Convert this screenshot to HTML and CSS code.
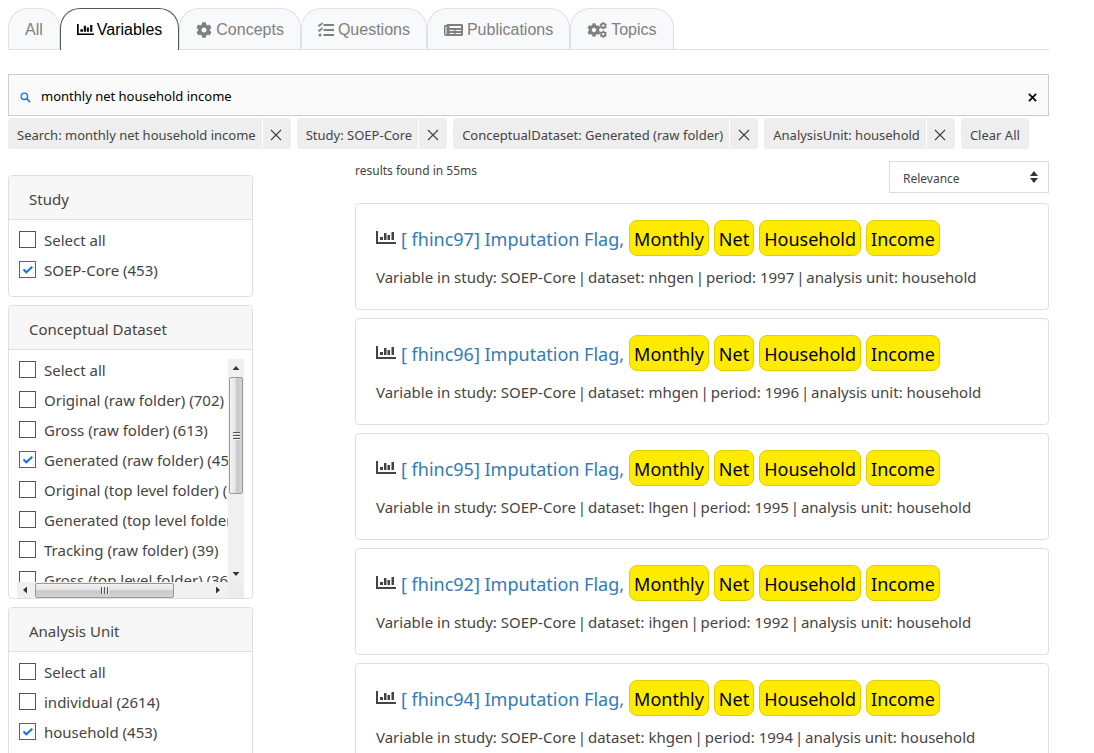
FILE: index.html
```html
<!DOCTYPE html>
<html lang="en">
<head>
<meta charset="utf-8">
<meta name="viewport" content="width=device-width, initial-scale=1">
<title>Variables search</title>
<link rel="stylesheet" href="styles.css">
</head>
<body>
<svg class="symbols" aria-hidden="true">
  <symbol id="i-chart" viewBox="0 0 20 14"><path fill="currentColor" d="M0 0h2v11h18v2H0zM4 6h3v3H4zM8 2h2.500v7H8zM11.500 4h2.500v5h-2.500zM15.500 1H18v8h-2.500z"/></symbol>
  <symbol id="i-cog" viewBox="0 0 512 512"><path fill="currentColor" d="M487.4 315.7l-42.600-24.600c4.300-23.200 4.300-47 0-70.200l42.600-24.600c4.900-2.800 7.100-8.600 5.500-14-11.100-35.600-30-67.800-54.700-94.600-3.800-4.100-10-5.100-14.800-2.300L380.800 110c-17.900-15.400-38.500-27.300-60.800-35.100V25.800c0-5.600-3.900-10.500-9.400-11.700-36.700-8.200-74.300-7.800-109.200 0-5.500 1.200-9.400 6.100-9.400 11.700V75c-22.200 7.900-42.800 19.800-60.800 35.100L88.700 85.500c-4.900-2.800-11-1.900-14.800 2.300-24.700 26.700-43.600 58.900-54.700 94.600-1.700 5.400.6 11.200 5.500 14L67.300 221c-4.300 23.200-4.300 47 0 70.200l-42.600 24.600c-4.900 2.800-7.100 8.600-5.500 14 11.100 35.600 30 67.800 54.700 94.600 3.800 4.100 10 5.100 14.800 2.300l42.600-24.600c17.900 15.400 38.500 27.300 60.800 35.100v49.200c0 5.600 3.900 10.500 9.400 11.700 36.700 8.200 74.300 7.800 109.200 0 5.500-1.200 9.400-6.100 9.400-11.700v-49.200c22.200-7.900 42.800-19.800 60.800-35.100l42.600 24.600c4.900 2.800 11 1.900 14.800-2.300 24.700-26.700 43.600-58.900 54.700-94.600 1.500-5.500-.7-11.300-5.600-14.100zM256 336c-44.100 0-80-35.900-80-80s35.900-80 80-80 80 35.900 80 80-35.900 80-80 80z"/></symbol>
  <symbol id="i-tasks" viewBox="0 0 16 16"><path d="M5.500 3H16M5.500 8H16M5.500 13H16" fill="none" stroke="currentColor" stroke-width="2"/><path d="M.3 2.700l1.200 1.200L4.500.9M.3 7.700l1.200 1.200 3-3" fill="none" stroke="currentColor" stroke-width="1.500"/><circle cx="2" cy="13" r="1.500" fill="currentColor"/></symbol>
  <symbol id="i-news" viewBox="0 0 19 14"><path fill="currentColor" fill-rule="evenodd" d="M3 1h15l1 1v10l-1 1H2a2 2 0 0 1-2-2V3a1 1 0 0 1 1-1h1.500zM1.500 3.500V11a.5.500 0 0 0 1 0V3.500zM5.500 3v2H17V3zm0 4v1H10V7zm6 0v1H17V7zm-6 3v1H10v-1zm6 0v1H17v-1z"/></symbol>
  <symbol id="i-cogs" viewBox="0 0 20 16"><use href="#i-cog" x="0" y="1" width="14" height="14"/><use href="#i-cog" x="12.500" y="0" width="7.500" height="7.500"/><use href="#i-cog" x="12.500" y="8.500" width="7.500" height="7.500"/></symbol>
  <symbol id="i-search" viewBox="0 0 12 12"><circle cx="4.700" cy="4.700" r="3.500" fill="none" stroke="currentColor" stroke-width="1.500"/><path d="M7.300 7.300L11 11" stroke="currentColor" stroke-width="1.800"/></symbol>
  <symbol id="i-close" viewBox="0 0 12 12"><path d="M1 1l10 10M11 1L1 11" stroke="currentColor" stroke-width="1.200"/></symbol>
  <symbol id="i-clear" viewBox="0 0 10 10"><path d="M1 1l8 8M9 1L1 9" stroke="currentColor" stroke-width="1.800"/></symbol>
</svg>

<div class="page">
  <nav class="tabs">
    <a class="tab" href="#all">All</a>
    <a class="tab active" href="#variables" aria-current="page"><svg class="icon chart"><use href="#i-chart"/></svg>Variables</a>
    <a class="tab" href="#concepts"><svg class="icon"><use href="#i-cog"/></svg>Concepts</a>
    <a class="tab" href="#questions"><svg class="icon"><use href="#i-tasks"/></svg>Questions</a>
    <a class="tab" href="#publications"><svg class="icon wide"><use href="#i-news"/></svg>Publications</a>
    <a class="tab" href="#topics"><svg class="icon widest"><use href="#i-cogs"/></svg>Topics</a>
  </nav>

  <form class="search">
    <svg class="search-icon"><use href="#i-search"/></svg>
    <input class="search-input" type="text" aria-label="Search" value="monthly net household income">
    <button class="search-clear" type="button" aria-label="Clear search"><svg><use href="#i-clear"/></svg></button>
  </form>

  <div class="chips">
    <div class="chip"><span class="chip-text">Search: monthly net household income</span><button class="chip-x" type="button" aria-label="Remove search"><svg><use href="#i-close"/></svg></button></div>
    <div class="chip"><span class="chip-text">Study: SOEP-Core</span><button class="chip-x" type="button" aria-label="Remove study"><svg><use href="#i-close"/></svg></button></div>
    <div class="chip"><span class="chip-text">ConceptualDataset: Generated (raw folder)</span><button class="chip-x" type="button" aria-label="Remove dataset"><svg><use href="#i-close"/></svg></button></div>
    <div class="chip"><span class="chip-text">AnalysisUnit: household</span><button class="chip-x" type="button" aria-label="Remove analysis unit"><svg><use href="#i-close"/></svg></button></div>
    <button class="chip chip-all" type="button">Clear All</button>
  </div>

  <div class="columns">
    <aside class="filters">
      <section class="panel">
        <h2 class="panel-title">Study</h2>
        <div class="options">
          <label class="option"><input type="checkbox">Select all</label>
          <label class="option"><input type="checkbox" checked>SOEP-Core (453)</label>
        </div>
      </section>
      <section class="panel">
        <h2 class="panel-title">Conceptual Dataset</h2>
        <div class="scroller">
          <div class="options clipped">
            <label class="option"><input type="checkbox">Select all</label>
            <label class="option"><input type="checkbox">Original (raw folder) (702)</label>
            <label class="option"><input type="checkbox">Gross (raw folder) (613)</label>
            <label class="option"><input type="checkbox" checked>Generated (raw folder) (453)</label>
            <label class="option"><input type="checkbox">Original (top level folder) (101)</label>
            <label class="option"><input type="checkbox">Generated (top level folder) (68)</label>
            <label class="option"><input type="checkbox">Tracking (raw folder) (39)</label>
            <label class="option"><input type="checkbox">Gross (top level folder) (36)</label>
          </div>
          <div class="bar vertical"><i class="arrow up"></i><i class="thumb"></i><i class="arrow down"></i></div>
          <div class="bar horizontal"><i class="arrow left"></i><i class="thumb"></i><i class="arrow right"></i></div>
          <div class="corner"></div>
        </div>
      </section>
      <section class="panel">
        <h2 class="panel-title">Analysis Unit</h2>
        <div class="options">
          <label class="option"><input type="checkbox">Select all</label>
          <label class="option"><input type="checkbox">individual (2614)</label>
          <label class="option"><input type="checkbox" checked>household (453)</label>
        </div>
      </section>
    </aside>

    <main class="results">
      <div class="results-head">
        <p class="count">results found in 55ms</p>
        <div class="sort">
          <select aria-label="Sort by"><option>Relevance</option></select>
        </div>
      </div>
      <article class="card">
        <h3 class="card-title"><svg class="icon chart"><use href="#i-chart"/></svg><a href="#fhinc97">[ fhinc97] Imputation Flag,</a> <mark>Monthly</mark> <mark>Net</mark> <mark>Household</mark> <mark>Income</mark></h3>
        <p class="meta">Variable in study: SOEP-Core <span class="sep">|</span> dataset: nhgen <span class="sep">|</span> period: 1997 <span class="sep">|</span> analysis unit: household</p>
      </article>
      <article class="card">
        <h3 class="card-title"><svg class="icon chart"><use href="#i-chart"/></svg><a href="#fhinc96">[ fhinc96] Imputation Flag,</a> <mark>Monthly</mark> <mark>Net</mark> <mark>Household</mark> <mark>Income</mark></h3>
        <p class="meta">Variable in study: SOEP-Core <span class="sep">|</span> dataset: mhgen <span class="sep">|</span> period: 1996 <span class="sep">|</span> analysis unit: household</p>
      </article>
      <article class="card">
        <h3 class="card-title"><svg class="icon chart"><use href="#i-chart"/></svg><a href="#fhinc95">[ fhinc95] Imputation Flag,</a> <mark>Monthly</mark> <mark>Net</mark> <mark>Household</mark> <mark>Income</mark></h3>
        <p class="meta">Variable in study: SOEP-Core <span class="sep">|</span> dataset: lhgen <span class="sep">|</span> period: 1995 <span class="sep">|</span> analysis unit: household</p>
      </article>
      <article class="card">
        <h3 class="card-title"><svg class="icon chart"><use href="#i-chart"/></svg><a href="#fhinc92">[ fhinc92] Imputation Flag,</a> <mark>Monthly</mark> <mark>Net</mark> <mark>Household</mark> <mark>Income</mark></h3>
        <p class="meta">Variable in study: SOEP-Core <span class="sep">|</span> dataset: ihgen <span class="sep">|</span> period: 1992 <span class="sep">|</span> analysis unit: household</p>
      </article>
      <article class="card">
        <h3 class="card-title"><svg class="icon chart"><use href="#i-chart"/></svg><a href="#fhinc94">[ fhinc94] Imputation Flag,</a> <mark>Monthly</mark> <mark>Net</mark> <mark>Household</mark> <mark>Income</mark></h3>
        <p class="meta">Variable in study: SOEP-Core <span class="sep">|</span> dataset: khgen <span class="sep">|</span> period: 1994 <span class="sep">|</span> analysis unit: household</p>
      </article>
    </main>
  </div>
</div>
</body>
</html>
```

FILE: styles.css
```css
* { box-sizing: border-box; }
html { overflow: hidden; }
body {
  margin: 0;
  height: 100vh;
  overflow: hidden;
  background: #fff;
  color: #444;
  font: 15px/20px "Noto Sans", "Open Sans", sans-serif;
}
button, input, select { font: inherit; color: inherit; }
button { border: 0; background: none; padding: 0; cursor: pointer; }
.symbols { display: none; }
.page { padding: 8px 45px 0 8px; }

.tabs {
  display: flex;
  border-bottom: 1px solid #dee2e6;
  font: 16px/24px "Liberation Sans", Arial, sans-serif;
}
.tab {
  display: flex;
  align-items: center;
  gap: 4px;
  padding: 9px 16px 7px;
  border: 1px solid #dee2e6;
  border-bottom: 0;
  border-radius: 20px 20px 0 0;
  background: #f8f9fa;
  color: #808080;
  text-decoration: none;
}
.tab.active {
  gap: 3px;
  margin-bottom: -1px;
  padding: 8px 16px;
  border-color: #555;
  background: #fff;
  color: #000;
}
.icon { width: 16px; height: 16px; flex: none; }
.icon.chart { width: 17px; height: 12px; }
.icon.wide { width: 19px; height: 14px; }
.icon.widest { width: 20px; }

.search {
  display: flex;
  align-items: center;
  height: 42px;
  margin: 24px 0 2px;
  padding: 2px 11px 0;
  border: 1px solid #ccc;
  background: #fafafa;
}
.search-icon { width: 11px; height: 11px; margin: 2px 10px 0 0; color: #1a73ff; }
.search-input {
  flex: 1;
  min-width: 0;
  padding: 0;
  border: 0;
  outline: 0;
  background: none;
  color: #000;
  font-size: 13px;
}
.search-clear { display: flex; padding-top: 2px; color: #000; }
.search-clear svg { width: 9px; height: 9px; }

.chips { display: flex; flex-wrap: wrap; gap: 6px; font-size: 13px; }
.chip { display: flex; height: 31px; border-radius: 3px; background: #eee; }
.chip-text { padding: 7px 6px 4px 9px; }
.chip-x {
  display: grid;
  place-items: center;
  width: 29px;
  padding: 2px 1px 0 0;
  border-left: 1px solid #fff;
}
.chip-x svg { width: 12px; height: 12px; }
.chip-all { align-items: center; padding: 3px 9px 0; }

.columns { display: flex; justify-content: space-between; margin-top: 12px; }
.filters {
  display: flex;
  flex-direction: column;
  gap: 8px;
  width: 245px;
  padding-top: 14px;
}
.panel { border: 1px solid #dfdfdf; border-radius: 4px; overflow: hidden; }
.panel-title {
  margin: 0;
  padding: 13px 20px 10px;
  border-bottom: 1px solid #dfdfdf;
  background: #f7f7f7;
  font-size: 15px;
  font-weight: 400;
}
.options { padding: 5px 10px 11px; }
.option { display: flex; align-items: center; gap: 8px; height: 30px; white-space: nowrap; }
.option input {
  appearance: none;
  flex: none;
  width: 17px;
  height: 17px;
  margin: 0 0 1px;
  border: 1px solid #555;
  background: #fff;
}
.option input:checked {
  border-color: #0d6efd;
  background: #fff url("data:image/svg+xml,%3Csvg xmlns='http://www.w3.org/2000/svg' viewBox='0 0 15 15'%3E%3Cpath d='M3.500 7.500l2.800 2.800 6-5.600' fill='none' stroke='%230d6efd' stroke-width='2'/%3E%3C/svg%3E") center / 15px 15px;
}

.scroller { display: grid; grid-template-columns: 1fr 16px 8px; grid-template-rows: 232px 16px; }
.options.clipped { min-width: 0; overflow: hidden; padding-right: 0; padding-bottom: 0; }
.bar { display: flex; align-items: center; background: #f0f0f0; }
.vertical { flex-direction: column; margin-top: 9px; }
.horizontal { grid-column: 1; grid-row: 2; margin-left: 8px; }
.corner { grid-column: 2; grid-row: 2; background: #ececec; }
.arrow { flex: none; width: 7px; height: 4px; background: #333; }
.up { margin: 7px 0; clip-path: polygon(50% 0, 100% 100%, 0 100%); }
.down { margin: auto 0 6px; clip-path: polygon(0 0, 100% 0, 50% 100%); }
.left, .right { width: 4px; height: 7px; }
.left { margin: 0 8px 0 6px; clip-path: polygon(100% 0, 100% 100%, 0 50%); }
.right { margin: 0 8px 0 auto; clip-path: polygon(0 0, 100% 50%, 0 100%); }
.thumb { position: relative; border: 1px solid #999; border-radius: 2px; }
.vertical .thumb { width: 14px; height: 117px; background: linear-gradient(90deg, #f4f4f4, #e2e2e2 45%, #c8c8cc 55%, #d4d4d6); }
.horizontal .thumb { width: 139px; height: 15px; background: linear-gradient(#f4f4f4, #e2e2e2 45%, #c8c8cc 55%, #d4d4d6); }
.thumb::after { content: ""; position: absolute; inset: 0; margin: auto; }
.vertical .thumb::after { width: 7px; height: 8px; background: repeating-linear-gradient(#555 0 1px, #eee 1px 2px, transparent 2px 3px); }
.horizontal .thumb::after { width: 8px; height: 7px; background: repeating-linear-gradient(90deg, #555 0 1px, #eee 1px 2px, transparent 2px 3px); }

.results { display: flex; flex-direction: column; gap: 8px; width: 694px; }
.results-head { display: flex; justify-content: space-between; align-items: flex-start; margin-bottom: 2px; }
.count { margin: 0; font-size: 12px; }
.sort { position: relative; width: 160px; }
.sort select {
  appearance: none;
  display: block;
  width: 100%;
  height: 32px;
  padding: 4px 24px 0 13px;
  border: 1px solid #dcdcdc;
  border-radius: 0;
  background: #fff;
  font-size: 12px;
}
.sort::before, .sort::after {
  content: "";
  position: absolute;
  right: 11px;
  width: 8px;
  height: 5px;
  background: #333;
  pointer-events: none;
}
.sort::before { top: 10px; clip-path: polygon(50% 0, 100% 100%, 0 100%); }
.sort::after { top: 17px; clip-path: polygon(0 0, 100% 0, 50% 100%); }
.card { height: 107px; padding: 16px 20px; border: 1px solid #dfdfdf; border-radius: 4px; }
.card-title {
  display: flex;
  align-items: center;
  gap: 5px;
  margin: 0;
  font-size: 18px;
  line-height: 24px;
  font-weight: 400;
}
.card-title .icon { width: 20px; height: 14px; }
.card-title a { padding-top: 2px; color: #337ab7; text-decoration: none; }
mark {
  padding: 6px 4px 4px;
  border: 1px solid #e0cf00;
  border-radius: 8px;
  background: #ffeb00;
  color: #000;
}
.meta { margin: 11px 0 0; }
.sep { margin: 0 -2px; }
```
